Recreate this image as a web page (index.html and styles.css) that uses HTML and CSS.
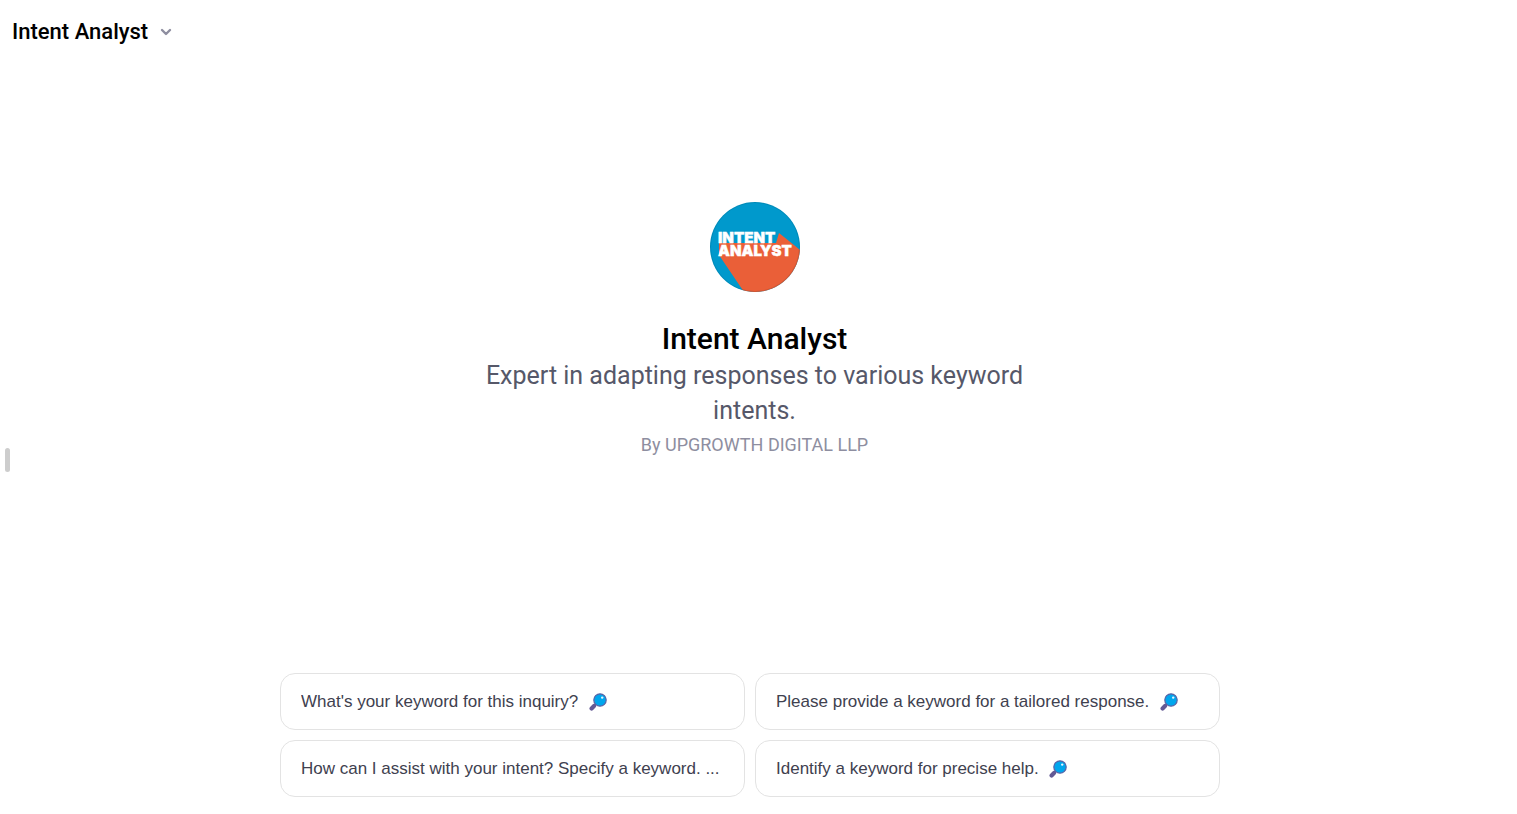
FILE: index.html
```html
<!DOCTYPE html>
<html lang="en">
<head>
    <meta charset="UTF-8">
    <meta name="viewport" content="width=device-width, initial-scale=1.0">
    <title>Intent Analyst</title>
    <link rel="stylesheet" href="styles.css">
</head>
<body>
    <!-- magnifier shared by the prompt cards -->
    <svg class="sprite" aria-hidden="true">
        <symbol id="magnifier" viewBox="0 0 18 18">
            <path d="M7.500 10.500 5 13" stroke="#635994" stroke-width="2"/>
            <path d="M5 13 2.600 15.400" stroke="#635994" stroke-width="4.200" stroke-linecap="round"/>
            <circle cx="11" cy="7" r="6.200" fill="#00a6ed" stroke="#5a63a5" stroke-width="1.200"/>
            <circle cx="13.200" cy="4.600" r="1.200" fill="#e6f6ff"/>
        </symbol>
    </svg>

    <header class="header">
        <button type="button" class="model-button">
            Intent Analyst
            <svg class="chevron" viewBox="0 0 12 8" aria-hidden="true">
                <path d="M2 2 6 6l4-4"/>
            </svg>
        </button>
    </header>

    <button type="button" class="sidebar-handle" aria-label="Open sidebar"></button>

    <main class="main">
        <section class="hero">
            <svg class="avatar" viewBox="0 0 90 90" role="img" aria-label="Intent Analyst logo">
                <clipPath id="round"><circle cx="45" cy="45" r="45"/></clipPath>
                <g clip-path="url(#round)">
                    <rect width="90" height="90" fill="#0099cc"/>
                    <path d="M9 53 34 90H90V48L84 43 69 31 66 41H9Z" fill="#ea5f38"/>
                </g>
                <circle cx="45" cy="45" r="44.500" class="avatar-ring"/>
                <text x="8" y="41" class="logo-text">INTENT</text>
                <text x="8" y="54" class="logo-text">ANALYST</text>
            </svg>
            <h1 class="title">Intent Analyst</h1>
            <p class="description">Expert in adapting responses to various keyword intents.</p>
            <p class="author">By UPGROWTH DIGITAL LLP</p>
        </section>

        <div class="prompts">
            <button type="button" class="prompt">
                <span class="prompt-text">What's your keyword for this inquiry? <svg class="magnifier"><use href="#magnifier"/></svg></span>
            </button>
            <button type="button" class="prompt">
                <span class="prompt-text">Please provide a keyword for a tailored response. <svg class="magnifier"><use href="#magnifier"/></svg></span>
            </button>
            <button type="button" class="prompt">
                <span class="prompt-text">How can I assist with your intent? Specify a keyword. ...</span>
            </button>
            <button type="button" class="prompt">
                <span class="prompt-text">Identify a keyword for precise help. <svg class="magnifier"><use href="#magnifier"/></svg></span>
            </button>
        </div>
    </main>
</body>
</html>
```
FILE: styles.css
```css
* {
    margin: 0;
    padding: 0;
    box-sizing: border-box;
}

body {
    font-family: Roboto, "Liberation Sans", sans-serif;
    background-color: #fff;
    color: #000;
    min-height: 100vh;
    display: flex;
    flex-direction: column;
}

button {
    font: inherit;
    background: none;
    border: none;
    cursor: pointer;
}

.sprite {
    display: none;
}

.header {
    height: 64px;
    padding: 0 12px;
    display: flex;
    align-items: center;
}

.model-button {
    display: flex;
    align-items: center;
    gap: 12px;
    font-size: 22px;
    font-weight: 500;
    line-height: 32px;
}

.chevron {
    width: 12px;
    height: 8px;
    fill: none;
    stroke: #8e8ea0;
    stroke-width: 2.4;
    stroke-linecap: round;
    stroke-linejoin: round;
}

/* sits over the left edge of the page */
.sidebar-handle {
    position: fixed;
    left: 5px;
    top: 448px;
    width: 5px;
    height: 24px;
    border-radius: 3px;
    background-color: #cdcdcd;
}

.main {
    flex: 1;
    display: flex;
    flex-direction: column;
    padding: 0 17px 17px 0;
}

.hero {
    flex: 1;
    display: flex;
    flex-direction: column;
    align-items: center;
    justify-content: center;
    padding: 0 0 74px 9px;
    text-align: center;
}

.avatar {
    width: 90px;
    height: 90px;
    margin-bottom: 28px;
}

.avatar-ring {
    fill: none;
    stroke: #000;
    stroke-opacity: 0.1;
}

.logo-text {
    font-family: Inter, sans-serif;
    font-size: 15px;
    font-weight: 900;
    fill: #fff;
    stroke: #fff;
    stroke-width: 0.4;
}

.title {
    font-size: 30px;
    font-weight: 500;
    line-height: 38px;
}

.description {
    max-width: 560px;
    color: #565869;
    font-size: 25px;
    line-height: 35px;
}

.author {
    color: #8e8ea0;
    font-size: 18px;
    line-height: 34px;
}

.prompts {
    width: 100%;
    max-width: 940px;
    margin: 0 auto;
    display: grid;
    grid-template-columns: 1fr 1fr;
    gap: 10px;
}

.prompt {
    min-width: 0;
    padding: 15px 20px;
    border: 1px solid #e3e3e3;
    border-radius: 15px;
    color: #40414f;
    font-family: "Liberation Sans", Arial, sans-serif;
    font-size: 17px;
    line-height: 25px;
    text-align: left;
}

.prompt-text {
    display: block;
    overflow: hidden;
    text-overflow: ellipsis;
    white-space: nowrap;
}

.magnifier {
    width: 18px;
    height: 18px;
    margin-left: 6px;
    vertical-align: -4px;
}
```
